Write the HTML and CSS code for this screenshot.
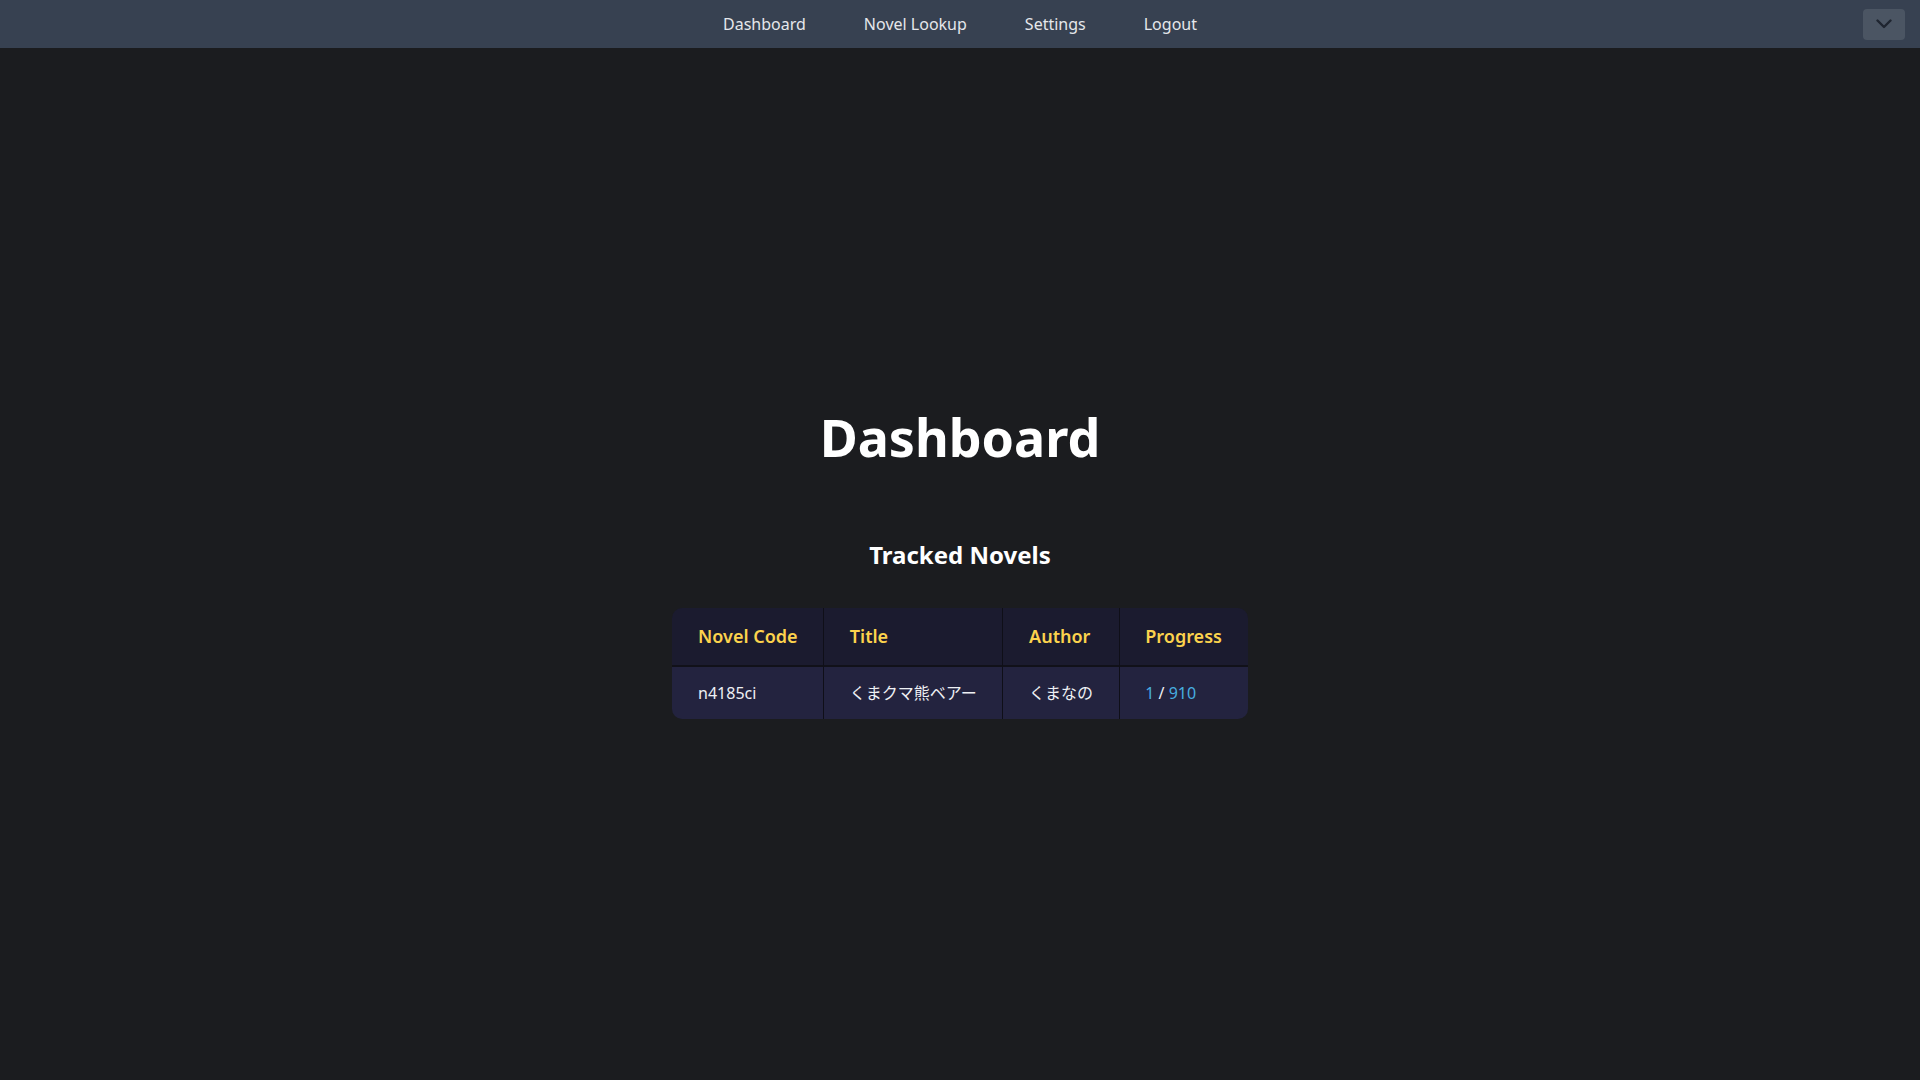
FILE: index.html
```html
<!DOCTYPE html>
<html lang="en">
<head>
<meta charset="utf-8">
<title>Dashboard</title>
<link rel="stylesheet" href="styles.css">
</head>
<body>
<header class="topbar">
  <div class="topbar-side"></div>
  <nav class="nav">
    <a class="nav-link" href="#">Dashboard</a>
    <a class="nav-link" href="#">Novel Lookup</a>
    <a class="nav-link" href="#">Settings</a>
    <a class="nav-link" href="#">Logout</a>
  </nav>
  <div class="topbar-side topbar-right">
    <button class="menu-btn" type="button" aria-label="Menu">
      <svg width="16" height="10" viewBox="0 0 16 10"><path d="M1.5 1.5 L8 8 L14.5 1.5" fill="none" stroke="#1f2530" stroke-width="2.4" stroke-linecap="round" stroke-linejoin="round"/></svg>
    </button>
  </div>
</header>
<main class="main">
  <h1 class="page-title">Dashboard</h1>
  <h2 class="section-title">Tracked Novels</h2>
  <table class="novels">
    <thead>
      <tr>
        <th>Novel Code</th>
        <th>Title</th>
        <th>Author</th>
        <th>Progress</th>
      </tr>
    </thead>
    <tbody>
      <tr>
        <td>n4185ci</td>
        <td>くまクマ熊ベアー</td>
        <td>くまなの</td>
        <td><span class="prog">1</span> / <span class="prog">910</span></td>
      </tr>
    </tbody>
  </table>
</main>
</body>
</html>
```
FILE: styles.css
```css
html, body {
  margin: 0;
  padding: 0;
}
body {
  background: #1b1c1f;
  color: #f3f4f6;
  font-family: "Noto Sans", "Noto Sans CJK JP", sans-serif;
  min-height: 100vh;
}
.topbar {
  height: 48px;
  background: #374151;
  display: grid;
  grid-template-columns: 1fr auto 1fr;
  align-items: center;
}
.topbar-right {
  display: flex;
  justify-content: flex-end;
  padding-right: 15px;
}
.nav {
  display: flex;
  align-items: center;
  gap: 58px;
}
.nav-link {
  color: #e5e7eb;
  text-decoration: none;
  font-size: 16px;
  line-height: 48px;
}
.menu-btn {
  width: 42px;
  height: 31px;
  border: none;
  border-radius: 4px;
  background: #4b5563;
  display: flex;
  align-items: center;
  justify-content: center;
  padding: 0;
  cursor: pointer;
}
.main {
  display: flex;
  flex-direction: column;
  align-items: center;
  padding-top: 355px;
}
.page-title {
  margin: 0;
  font-size: 52px;
  line-height: 67px;
  font-weight: 700;
  color: #ffffff;
}
.section-title {
  margin: 70px 0 0;
  font-size: 24px;
  line-height: 29px;
  font-weight: 700;
  color: #ffffff;
}
.novels {
  margin-top: 39px;
  border-collapse: separate;
  border-spacing: 0;
  border-radius: 10px;
  overflow: hidden;
  text-align: left;
}
.novels th {
  background: #1b1b2f;
  color: #fcd34d;
  font-size: 18px;
  font-weight: 600;
  line-height: 27px;
  padding: 15px 25.6px;
  border-bottom: 2px solid #111119;
  border-right: 1px solid #0f0f18;
}
.novels td {
  background: #23233f;
  color: #eef0f4;
  font-size: 16px;
  line-height: 24px;
  padding: 14px 25.6px;
  border-right: 1px solid #0f0f18;
}
.novels th:last-child,
.novels td:last-child {
  border-right: none;
}
.prog {
  color: #47aee0;
}
```
